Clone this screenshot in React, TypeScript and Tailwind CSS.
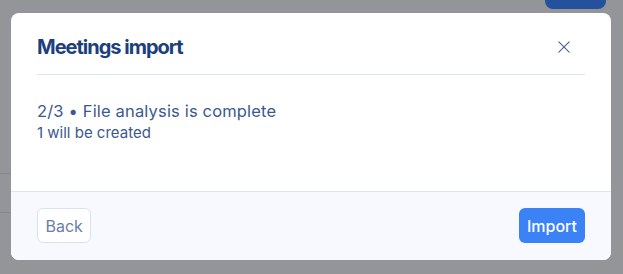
import React from 'react';

export default function App() {
  return (
    <div
      className="relative h-[274px] w-full overflow-hidden bg-[#939598]"
      style={{ fontFamily: 'Inter, "Noto Sans", sans-serif' }}
    >
      {/* page behind the overlay */}
      <div className="absolute right-[17px] top-0 h-[9px] w-[61px] rounded-b-lg bg-[#24519c]" />
      <div className="absolute left-0 top-[173px] h-px w-[12px] bg-[#86888c]" />
      <div className="absolute left-0 top-[212px] h-px w-[12px] bg-[#86888c]" />

      {/* Modal */}
      <div className="absolute left-[11px] top-[13px] flex h-[247px] w-[600px] flex-col overflow-hidden rounded-lg bg-white">
        <div className="px-[26px]">
          <div className="flex items-center justify-between border-b border-[#dce5f5] pb-[13px] pt-[20px]">
            <h2 className="text-[20px] font-bold leading-7 tracking-[-0.05em] text-[#1c3f7e]">Meetings import</h2>
            <button type="button" className="mr-[11px] flex h-5 w-5 items-center justify-center text-[#4d6296]">
              <svg className="h-[12px] w-[12px]" viewBox="0 0 14 14" fill="none" stroke="currentColor" strokeWidth={1.3} strokeLinecap="round">
                <path d="M1 1l12 12M13 1L1 13" />
              </svg>
            </button>
          </div>
        </div>

        <div className="flex-1 px-[26px] pt-[24px]">
          <p className="text-[16.5px] leading-6 tracking-[0.01em] text-[#3b5990]">2/3 • File analysis is complete</p>
          <p className="text-[15px] leading-5 text-[#3b5990]">1 will be created</p>
        </div>

        <div className="flex items-center justify-between border-t border-[#dce3f1] bg-[#f7f9fe] px-[26px] pb-[17px] pt-[16px]">
          <button
            type="button"
            className="h-[35px] rounded-md border border-[#d9e1f2] bg-white px-[7.5px] text-[16px] text-[#6a7ea6]"
          >
            Back
          </button>
          <button
            type="button"
            className="h-[35px] rounded-md bg-[#3b82f6] px-2 text-[16px] font-medium text-white"
          >
            Import
          </button>
        </div>
      </div>
    </div>
  );
}
